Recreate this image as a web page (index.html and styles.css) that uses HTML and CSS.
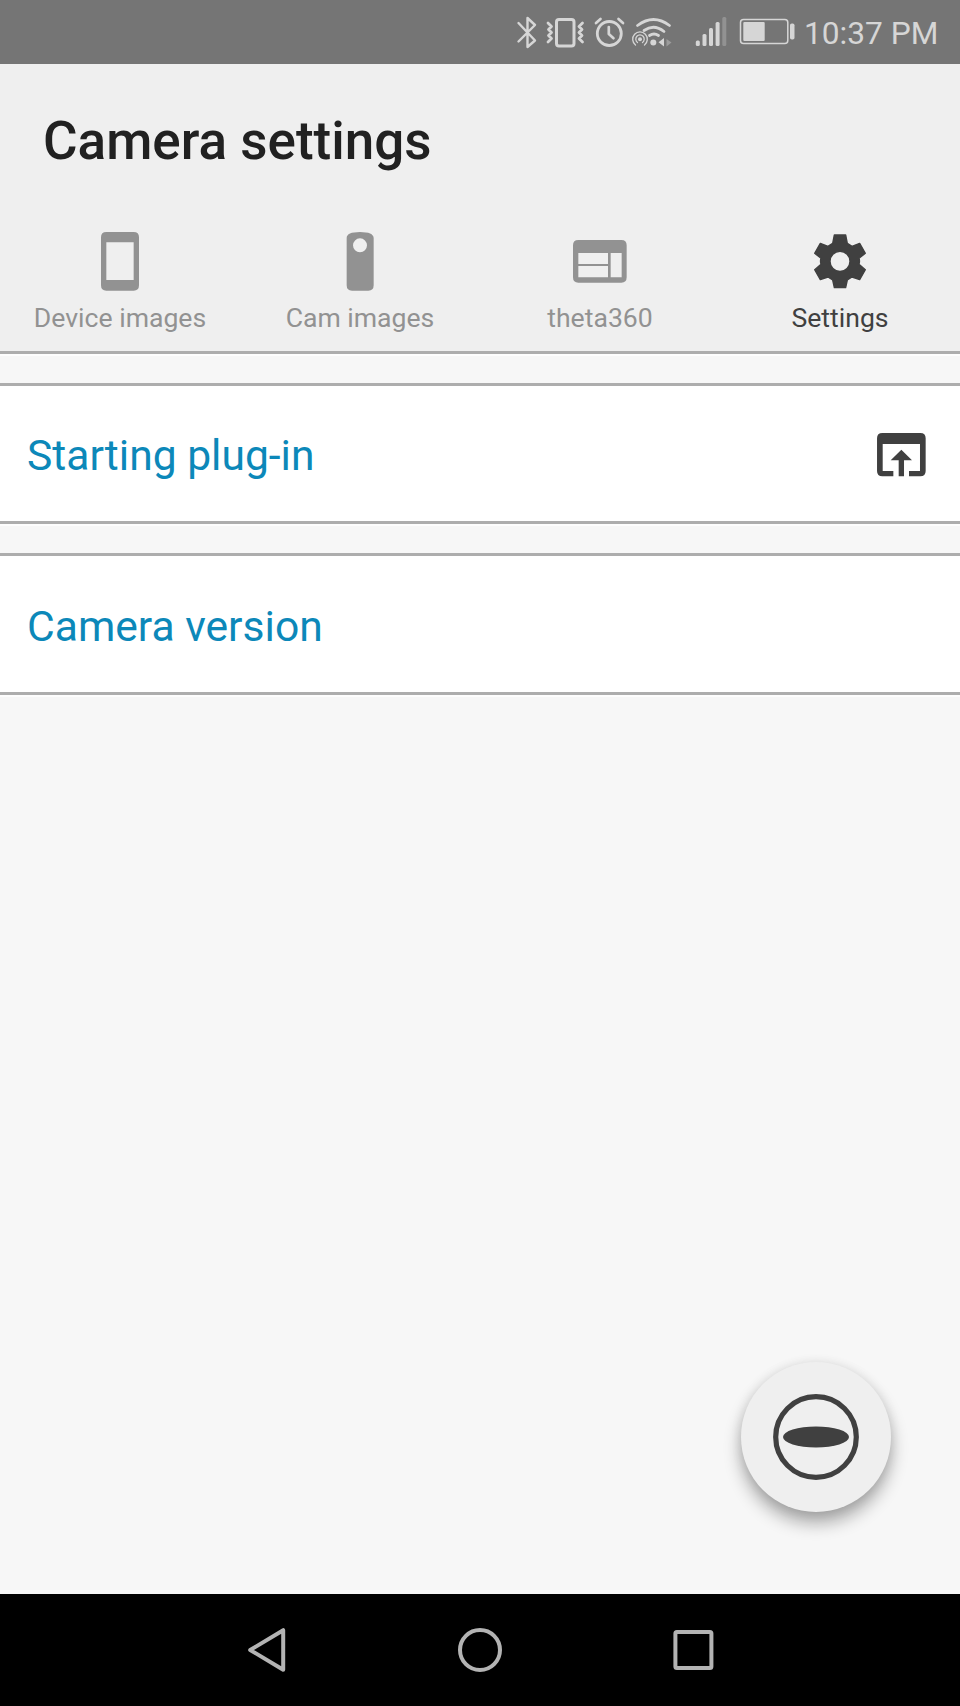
FILE: index.html
```html
<!DOCTYPE html>
<html lang="en">
<head>
<meta charset="utf-8">
<title>Camera settings</title>
<link rel="stylesheet" href="styles.css">
</head>
<body>
<div class="screen">
  <div class="status">
    <svg class="status-icons" viewBox="510 0 290 64" width="290" height="64" fill="none" stroke="#d6d6d6" stroke-linecap="round" stroke-linejoin="round">
      <path d="M518.500 23 535 40.500 527.500 47V18L535 25 518.500 41.500" stroke-width="2.400"/>
      <rect x="556.500" y="19.500" width="17.500" height="26.500" rx="2.500" stroke-width="3"/>
      <path d="M548 23l3.500 3.500-3 3 3 3-3 3 3 3-3.500 3.500M582.500 23l-3.500 3.500 3 3-3 3 3 3-3 3 3.500 3.500" stroke-width="2.800"/>
      <circle cx="609.300" cy="33.500" r="12" stroke-width="2.800"/>
      <path d="M608.800 27v7l4.700 4.200M596 23l4.500-4M618.500 19l4.500 4" stroke-width="2.700"/>
      <path d="M637.500 25.500Q653.500 13.500 669.500 25.500M644 30.500Q654 23.500 664 31.500M649.500 35.500Q654 32.500 658.500 35.500" stroke-width="2.800"/>
      <path d="M635.500 45a7.300 7.300 0 1 1 9 0M637.500 42.500a4.200 4.200 0 1 1 5 0" stroke-width="1.300"/>
      <g fill="#d6d6d6" stroke="none">
        <circle cx="640" cy="39.300" r="2"/><circle cx="653.300" cy="42.500" r="3"/>
        <path d="M658.500 42.300 664 38v8.500z"/><path d="M666.500 39v7.500l5-4z" opacity=".4"/>
        <rect x="695.800" y="40.500" width="4" height="5.500" rx="1.500"/>
        <rect x="702.500" y="34" width="4" height="12" rx="1.500"/>
        <rect x="709" y="28" width="4" height="18" rx="1.500"/>
        <rect x="715.600" y="22" width="4" height="24" rx="1.500"/>
        <rect x="722.300" y="17" width="4" height="29" rx="1.500" opacity=".3"/>
        <rect x="743.300" y="22" width="21.400" height="19" rx="1"/>
        <rect x="790" y="23.500" width="4.500" height="16" rx="1.800"/>
      </g>
      <rect x="740.500" y="19.500" width="47.300" height="24" rx="3" stroke-width="1.500"/>
    </svg>
    <span class="clock">10:37 PM</span>
  </div>

  <header class="header">
    <h1 class="title">Camera settings</h1>
    <nav class="tabs">
      <div class="tab">
        <svg class="tab-icon" viewBox="270 420 180 192" width="60" height="64"><path fill="currentColor" fill-rule="evenodd" d="M319 426h82q16 0 16 16v144q0 16-16 16h-82q-16 0-16-16V442q0-16 16-16zM319 457v113h82V457z"/></svg>
        <span class="tab-label">Device images</span>
      </div>
      <div class="tab">
        <svg class="tab-icon" viewBox="990 420 180 192" width="60" height="64"><path fill="currentColor" fill-rule="evenodd" d="M1040 444q0-18 40-18t41 18v142q0 16-16 16h-49q-16 0-16-16zM1059 466a21 21 0 1 0 42 0 21 21 0 1 0-42 0z"/></svg>
        <span class="tab-label">Cam images</span>
      </div>
      <div class="tab">
        <svg class="tab-icon" viewBox="270 60 180 192" width="60" height="64"><path fill="currentColor" fill-rule="evenodd" d="M295 90h129q16 0 16 16v96q0 16-16 16H295q-16 0-16-16v-96q0-16 16-16zM295 129v33h89v-33zM295 168v34h89v-34zM392 129v73h33v-73z"/></svg>
        <span class="tab-label">theta360</span>
      </div>
      <div class="tab tab-active">
        <svg class="tab-icon" viewBox="990 59 180 192" width="60" height="64"><path fill="currentColor" stroke="currentColor" stroke-width="4" stroke-linejoin="round" fill-rule="evenodd" d="M1063 74h34l5 25 14 9 23-9 17 30-19 15q3 9 0 18l19 16-17 30-23-8-14 9-5 23h-34l-5-23-14-9-23 8-17-30 19-16q-3-9 0-18l-19-15 17-30 23 9 14-9zM1050 153a30 30 0 1 0 60 0 30 30 0 1 0-60 0z"/></svg>
        <span class="tab-label">Settings</span>
      </div>
    </nav>
  </header>

  <main class="content">
    <div class="row">
      <span>Starting plug-in</span>
      <svg viewBox="111 99 146 130" width="48.700" height="43.300" fill="#404040"><path d="M127 99h114q16 0 16 16v98q0 16-16 16h-34v-16h33v-81H128v81h32v16h-33q-16 0-16-16v-98q0-16 16-16z"/><path d="M184 149l32 32h-24v48h-16v-48h-24z"/></svg>
    </div>
    <div class="row"><span>Camera version</span></div>
    <button class="fab" aria-label="Capture">
      <svg viewBox="0 0 86 86" width="86" height="86"><circle cx="43" cy="43" r="40.300" fill="none" stroke="#404040" stroke-width="5.200"/><ellipse cx="43" cy="43" rx="33" ry="10.600" fill="#404040"/></svg>
    </button>
  </main>

  <div class="navbar">
    <svg viewBox="0 0 48 48" width="48" height="48"><path d="M7.200 24 40.200 4.200V43.800z"/></svg>
    <svg viewBox="0 0 48 48" width="48" height="48"><circle cx="24" cy="24" r="20"/></svg>
    <svg viewBox="0 0 48 48" width="48" height="48"><rect x="6.400" y="6" width="36" height="36" rx="1.500"/></svg>
  </div>
</div>
</body>
</html>
```
FILE: styles.css
```css
* { box-sizing: border-box; }
body { margin: 0; font-family: Roboto, "Liberation Sans", sans-serif; }
.screen { width: 960px; height: 1706px; display: flex; flex-direction: column; background: #f7f7f7; overflow: hidden; }
svg { display: block; flex: none; }

.status { height: 64px; flex: none; display: flex; align-items: center; background: #757575; padding-left: 510px; }
.clock { margin-left: 4px; font-size: 31.700px; line-height: 64px; padding-top: 4px; color: #d6d6d6; white-space: nowrap; }

.header { height: 290px; flex: none; background: #efefef; border-bottom: 3px solid #adadad; display: flex; flex-direction: column; box-shadow: 0 2px 0 #fdfdfd; }
.title { margin: 0; padding: 45px 0 0 43px; height: 161px; font-size: 53px; line-height: 64px; font-weight: 500; color: #212121; white-space: nowrap; }
.tabs { display: grid; grid-template-columns: repeat(4, 1fr); }
.tab { display: flex; flex-direction: column; align-items: center; padding-top: 5px; color: #929292; }
.tab-active { color: #404040; }
.tab-label { font-size: 26.600px; line-height: 32px; margin-top: 8px; white-space: nowrap; }

.content { flex: 1; position: relative; padding-top: 29px; }
.row { height: 141px; margin-bottom: 29px; padding: 3px 34px 0 27px; display: flex; align-items: center; justify-content: space-between; background: #fff; border-top: 3px solid #adadad; border-bottom: 3px solid #adadad; box-shadow: 0 2px 0 #fdfdfd; color: #0c88b9; font-size: 42.600px; line-height: 50px; }
.row + .row { height: 142px; }
.fab { position: absolute; right: 69px; bottom: 82px; width: 150px; height: 150px; padding: 0; border: 0; border-radius: 50%; background: #efefef; display: flex; align-items: center; justify-content: center; box-shadow: 0 11px 17px rgba(0,0,0,.32), 0 1px 12px rgba(0,0,0,.09); }

.navbar { height: 112px; flex: none; background: #000; display: flex; align-items: center; justify-content: center; gap: 165px; }
.navbar svg { fill: none; stroke: #b3b3b3; stroke-width: 4; stroke-linejoin: round; }
```
